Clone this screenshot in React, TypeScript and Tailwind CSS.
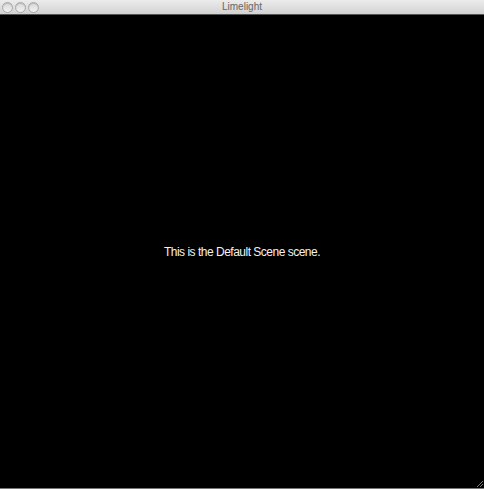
const TrafficLight = () => (
  <span className="w-[11px] h-[11px] rounded-full border border-[#a9a9a9] bg-gradient-to-b from-[#d9d9d9] to-[#f2f2f2] shadow-[inset_0_1px_1px_rgba(0,0,0,0.15)]" />
);

export default function App() {
  return (
    <div className="w-[484px] h-[489px] flex flex-col bg-black font-['Liberation_Sans',Arial,sans-serif]">
      <div className="relative h-[15px] flex items-center shrink-0 bg-gradient-to-b from-[#ececec] to-[#d2d2d2] border-b border-[#555]">
        <div className="flex gap-[2px] pl-[2px] items-center">
          <TrafficLight />
          <TrafficLight />
          <TrafficLight />
        </div>
        <div className="absolute inset-0 flex items-center justify-center text-[10px] leading-none text-[#666]">
          Limelight
        </div>
      </div>
      <div className="relative flex-1 flex items-center justify-center border-b border-[#777]">
        <p className="text-[12px] tracking-[-0.5px] text-[#f2f2f2] leading-none">This is the Default Scene scene.</p>
        <svg className="absolute right-0 bottom-0" width="10" height="10" viewBox="0 0 10 10">
          <path d="M9 3 L3 9 M9 6 L6 9" stroke="#777" strokeWidth="1" />
        </svg>
      </div>
    </div>
  );
}
